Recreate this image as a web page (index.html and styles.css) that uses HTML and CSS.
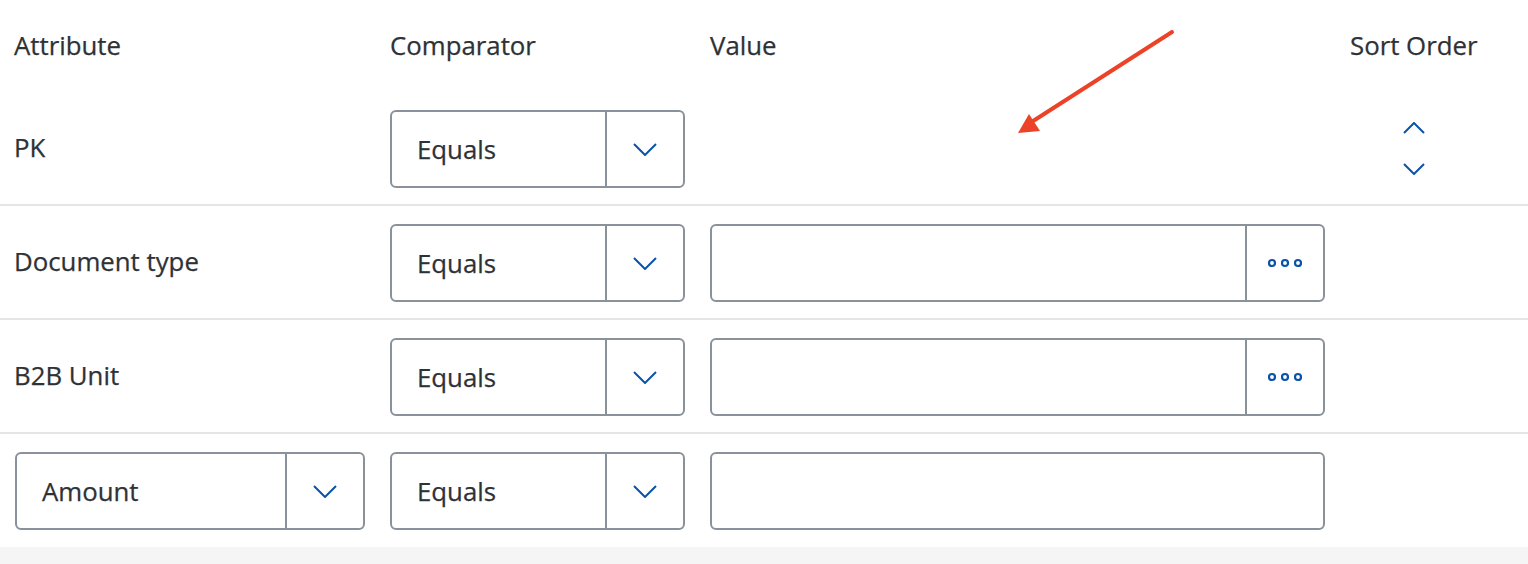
FILE: index.html
```html
<!DOCTYPE html>
<html lang="en">
<head>
<meta charset="utf-8">
<title>Search attributes</title>
<link rel="stylesheet" href="styles.css">
</head>
<body>
<div class="page">
  <div class="row header">
    <div class="cell">Attribute</div>
    <div class="cell">Comparator</div>
    <div class="cell">Value</div>
    <div class="cell">Sort Order</div>
  </div>

  <div class="row body-row">
    <div class="cell label">PK</div>
    <div class="select">
      <span class="select-text">Equals</span>
      <span class="select-btn"><svg class="chev" viewBox="0 0 24 13" width="24" height="13"><path d="M1 1 L12 12 L23 1"/></svg></span>
    </div>
    <div class="cell"></div>
    <div class="sort">
      <svg class="sort-chev" viewBox="0 0 22 12" width="22" height="12"><path d="M1 11 L11 1 L21 11"/></svg>
      <svg class="sort-chev" viewBox="0 0 22 12" width="22" height="12"><path d="M1 1 L11 11 L21 1"/></svg>
    </div>
  </div>

  <div class="row body-row">
    <div class="cell label">Document type</div>
    <div class="select">
      <span class="select-text">Equals</span>
      <span class="select-btn"><svg class="chev" viewBox="0 0 24 13" width="24" height="13"><path d="M1 1 L12 12 L23 1"/></svg></span>
    </div>
    <div class="select">
      <span class="select-text"></span>
      <span class="select-btn"><svg class="dots" viewBox="0 0 34 10" width="34" height="10"><circle cx="4" cy="5" r="3"/><circle cx="17" cy="5" r="3"/><circle cx="30" cy="5" r="3"/></svg></span>
    </div>
    <div class="cell"></div>
  </div>

  <div class="row body-row">
    <div class="cell label">B2B Unit</div>
    <div class="select">
      <span class="select-text">Equals</span>
      <span class="select-btn"><svg class="chev" viewBox="0 0 24 13" width="24" height="13"><path d="M1 1 L12 12 L23 1"/></svg></span>
    </div>
    <div class="select">
      <span class="select-text"></span>
      <span class="select-btn"><svg class="dots" viewBox="0 0 34 10" width="34" height="10"><circle cx="4" cy="5" r="3"/><circle cx="17" cy="5" r="3"/><circle cx="30" cy="5" r="3"/></svg></span>
    </div>
    <div class="cell"></div>
  </div>

  <div class="row body-row last">
    <div class="select">
      <span class="select-text">Amount</span>
      <span class="select-btn"><svg class="chev" viewBox="0 0 24 13" width="24" height="13"><path d="M1 1 L12 12 L23 1"/></svg></span>
    </div>
    <div class="select">
      <span class="select-text">Equals</span>
      <span class="select-btn"><svg class="chev" viewBox="0 0 24 13" width="24" height="13"><path d="M1 1 L12 12 L23 1"/></svg></span>
    </div>
    <div class="select">
      <span class="select-text"></span>
    </div>
    <div class="cell"></div>
  </div>

  <div class="footer"></div>

  <svg class="annotation" viewBox="0 0 1528 564" width="1528" height="564">
    <line x1="1172" y1="32" x2="1030" y2="123" stroke="#ec4328" stroke-width="4" stroke-linecap="round"/>
    <polygon points="1018,133 1029,114 1040,131" fill="#ec4328"/>
  </svg>
</div>
</body>
</html>
```

FILE: styles.css
```css
html, body {
  margin: 0;
  padding: 0;
  background: #ffffff;
}

.page {
  position: relative;
  width: 1528px;
  height: 564px;
  overflow: hidden;
  font-family: "Open Sans", "Liberation Sans", sans-serif;
  font-size: 25.8px;
  color: #2e3236;
  -webkit-text-stroke: 0.25px #2e3236;
}

.row {
  display: grid;
  grid-template-columns: 350px 295px 615px auto;
  column-gap: 25px;
  padding-left: 15px;
  align-items: center;
}

.header {
  height: 92px;
  padding-left: 14px;
  grid-template-columns: 351px 295px 615px auto;
}

.header .cell {
  padding-bottom: 2px;
}

.body-row {
  padding-top: 18px;
  padding-bottom: 16px;
  border-bottom: 2px solid #e5e5e5;
}

.body-row.last {
  border-bottom: none;
  padding-bottom: 17px;
}

.label {
  margin-left: -1px;
  padding-bottom: 4px;
}

.select {
  display: flex;
  box-sizing: border-box;
  height: 78px;
  border: 2px solid #89919a;
  border-radius: 6px;
  background: #ffffff;
}

.select-text {
  flex: 1;
  display: flex;
  align-items: center;
  padding-left: 25px;
}

.select-btn {
  width: 76px;
  border-left: 2px solid #89919a;
  display: flex;
  align-items: center;
  justify-content: center;
}

.chev path {
  fill: none;
  stroke: #0a53a8;
  stroke-width: 2;
}

.dots circle {
  fill: none;
  stroke: #0a53a8;
  stroke-width: 2.2;
}

.sort {
  justify-self: start;
  width: 128px;
  display: flex;
  flex-direction: column;
  align-items: center;
  gap: 29px;
  padding-bottom: 2px;
}

.sort-chev path {
  fill: none;
  stroke: #0a53a8;
  stroke-width: 2;
}

.footer {
  height: 17px;
  background: #f5f5f5;
}

.annotation {
  position: absolute;
  left: 0;
  top: 0;
  pointer-events: none;
}
```
